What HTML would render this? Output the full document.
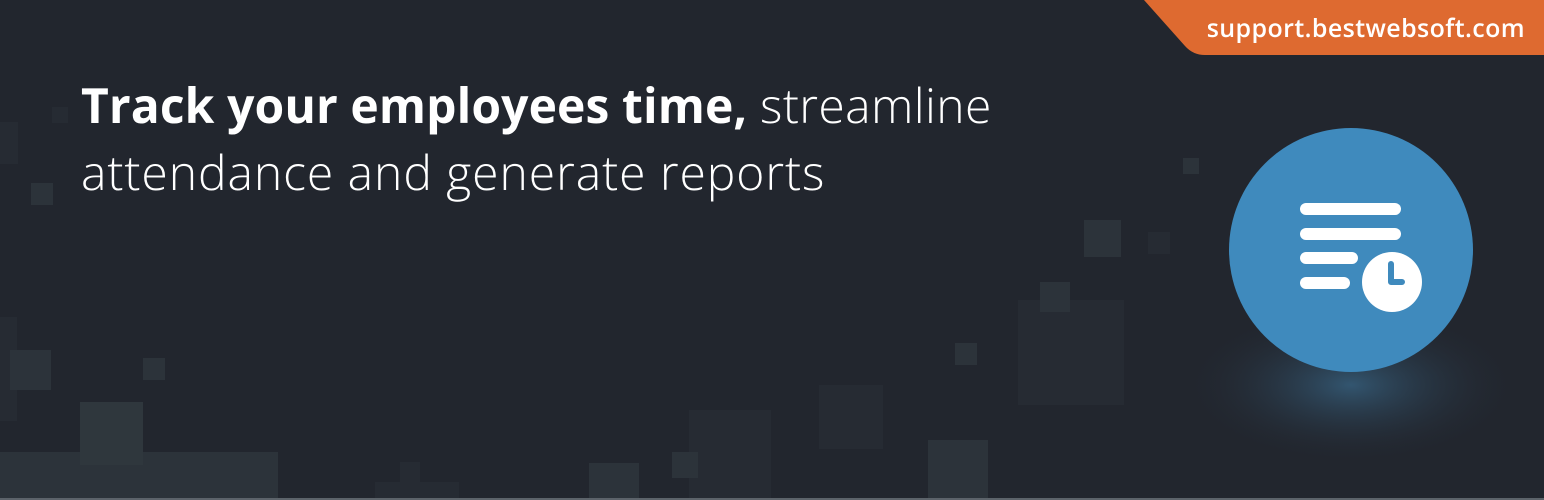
<!DOCTYPE html>
<html><head><meta charset="utf-8"><style>
html,body{margin:0;padding:0}
body{width:1544px;height:500px;background:#22262e;position:relative;overflow:hidden;font-family:"Open Sans","Liberation Sans",sans-serif}
.s{position:absolute;background:#2c333a}
.d{position:absolute;background:#262b33}
.t{position:absolute;left:81px;top:72px;color:#fff;font-size:48px;line-height:67px;font-weight:300;letter-spacing:0.4px;white-space:nowrap}
.t b{font-weight:700;letter-spacing:0.1px}
.t .l2{letter-spacing:0.95px}
</style></head><body>
<div class="d" style="left:0;top:122px;width:18px;height:42px"></div>
<div class="d" style="left:52px;top:107px;width:16px;height:16px"></div>
<div class="s" style="left:31px;top:183px;width:22px;height:22px"></div>
<div class="s" style="left:1183px;top:158px;width:16px;height:16px"></div>
<div class="s" style="left:1084px;top:220px;width:37px;height:37px"></div>
<div class="d" style="left:1148px;top:232px;width:22px;height:22px"></div>
<div class="d" style="left:1018px;top:300px;width:106px;height:105px"></div>
<div class="s" style="left:1040px;top:282px;width:30px;height:30px"></div>
<div class="s" style="left:955px;top:343px;width:22px;height:22px"></div>
<div class="d" style="left:0;top:317px;width:17px;height:104px"></div>
<div class="s" style="left:10px;top:350px;width:41px;height:40px"></div>
<div class="s" style="left:143px;top:358px;width:22px;height:22px"></div>
<div class="s" style="left:0;top:452px;width:278px;height:48px"></div>
<div class="s" style="left:80px;top:402px;width:63px;height:63px;background:#2f373d"></div>
<div class="d" style="left:819px;top:385px;width:64px;height:64px"></div>
<div class="d" style="left:689px;top:410px;width:82px;height:90px"></div>
<div class="s" style="left:672px;top:452px;width:26px;height:26px"></div>
<div class="s" style="left:589px;top:463px;width:50px;height:37px"></div>
<div class="s" style="left:928px;top:440px;width:60px;height:60px"></div>
<div class="d" style="left:400px;top:462px;width:20px;height:20px"></div>
<div class="d" style="left:375px;top:482px;width:84px;height:18px"></div>
<div style="position:absolute;left:0;top:498px;width:1544px;height:2px;background:#5c636a"></div>
<div class="t"><b>Track your employees time,</b> streamline<br><span class="l2">attendance and generate reports</span></div>
<svg style="position:absolute;left:0;top:0" width="1544" height="500">
<defs><radialGradient id="g" cx="0.5" cy="0.5" r="0.5"><stop offset="0" stop-color="#3a6a8c" stop-opacity="0.7"/><stop offset="1" stop-color="#22262e" stop-opacity="0"/></radialGradient></defs>
<ellipse cx="1351" cy="385" rx="170" ry="80" fill="url(#g)"/>
<path d="M1144 0 H1544 V55 H1205 Q1193 55 1185 46 Z" fill="#de6a30"/>
<text x="1525" y="37" text-anchor="end" fill="#fff" font-family="Open Sans,Liberation Sans,sans-serif" font-size="25" font-weight="600" letter-spacing="0.4">support.bestwebsoft.com</text>
<circle cx="1351" cy="250" r="122" fill="#3f8abd"/>
<g stroke="#fff" stroke-width="12" stroke-linecap="round">
<line x1="1306" y1="209" x2="1395" y2="209"/>
<line x1="1306" y1="234" x2="1395" y2="234"/>
<line x1="1306" y1="258" x2="1352" y2="258"/>
<line x1="1306" y1="283" x2="1344" y2="283"/>
</g>
<circle cx="1392" cy="282" r="30" fill="#fff"/>
<path d="M1391 264 V282 H1402" stroke="#3f8abd" stroke-width="6" fill="none" stroke-linecap="round" stroke-linejoin="round"/>
</svg>
</body></html>
